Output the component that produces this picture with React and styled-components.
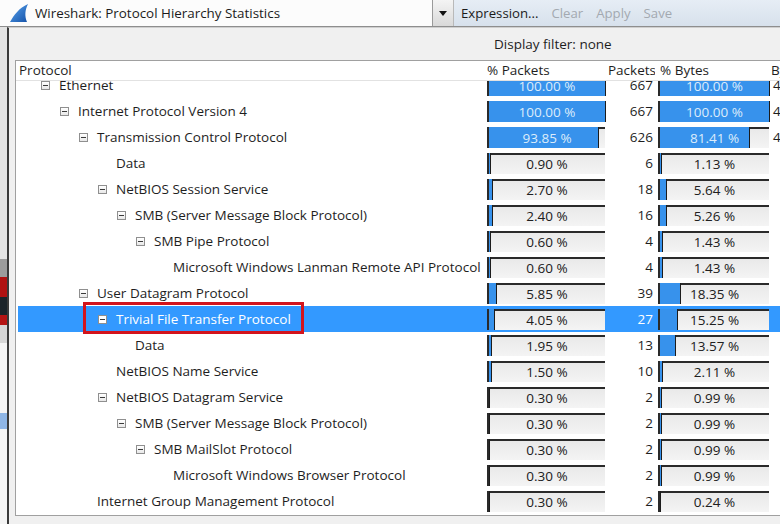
import React from 'react'
import styled, { createGlobalStyle } from 'styled-components'

const GlobalStyle = createGlobalStyle`
  html, body {
    margin: 0;
    padding: 0;
    background: #f0f0f0;
  }
  body {
    font-family: "Open Sans", "Noto Sans", sans-serif;
    color: #1e1e1e;
  }
`

const rows = [
  { name: 'Ethernet', level: 0, exp: true, pp: 100, pk: 667, bp: 100, b: '4' },
  { name: 'Internet Protocol Version 4', level: 1, exp: true, pp: 100, pk: 667, bp: 100, b: '4' },
  { name: 'Transmission Control Protocol', level: 2, exp: true, pp: 93.85, pk: 626, bp: 81.41, b: '4' },
  { name: 'Data', level: 3, pp: 0.9, pk: 6, bp: 1.13 },
  { name: 'NetBIOS Session Service', level: 3, exp: true, pp: 2.7, pk: 18, bp: 5.64 },
  { name: 'SMB (Server Message Block Protocol)', level: 4, exp: true, pp: 2.4, pk: 16, bp: 5.26 },
  { name: 'SMB Pipe Protocol', level: 5, exp: true, pp: 0.6, pk: 4, bp: 1.43 },
  { name: 'Microsoft Windows Lanman Remote API Protocol', level: 6, pp: 0.6, pk: 4, bp: 1.43 },
  { name: 'User Datagram Protocol', level: 2, exp: true, pp: 5.85, pk: 39, bp: 18.35 },
  { name: 'Trivial File Transfer Protocol', level: 3, exp: true, pp: 4.05, pk: 27, bp: 15.25, selected: true },
  { name: 'Data', level: 4, pp: 1.95, pk: 13, bp: 13.57 },
  { name: 'NetBIOS Name Service', level: 3, pp: 1.5, pk: 10, bp: 2.11 },
  { name: 'NetBIOS Datagram Service', level: 3, exp: true, pp: 0.3, pk: 2, bp: 0.99 },
  { name: 'SMB (Server Message Block Protocol)', level: 4, exp: true, pp: 0.3, pk: 2, bp: 0.99 },
  { name: 'SMB MailSlot Protocol', level: 5, exp: true, pp: 0.3, pk: 2, bp: 0.99 },
  { name: 'Microsoft Windows Browser Protocol', level: 6, pp: 0.3, pk: 2, bp: 0.99 },
  { name: 'Internet Group Management Protocol', level: 2, pp: 0.3, pk: 2, bp: 0.24 },
]

// bits of the main window peeking out on the left
const strip = [
  { c: '#e4e4e4', h: 232 },
  { c: '#9c9c9c', h: 18 },
  { c: '#b01212', h: 20 },
  { c: '#1c242a', h: 18 },
  { c: '#b51414', h: 10 },
  { c: '#d6d6d6', h: 18 },
  { c: '#f4f4f4', h: 70 },
  { c: '#8fb6e6', h: 16 },
  { c: '#f4f4f4', h: 100 },
]

const Screen = styled.div`
  width: 780px;
  height: 524px;
  overflow: hidden;
  display: flex;
  flex-direction: column;
`

const TopBar = styled.div`
  height: 26px;
  display: flex;
  border-bottom: 1px solid #8e8e8e;
  flex-shrink: 0;
`

const TitleArea = styled.div`
  width: 432px;
  display: flex;
  align-items: center;
  gap: 6px;
  padding-left: 9px;
  box-sizing: border-box;
  background: #fcfcfc;
  font-size: 13.4px;
  color: #1b1b1b;
`

const DropButton = styled.div`
  width: 20px;
  display: flex;
  align-items: center;
  justify-content: center;
  border-left: 1px solid #9a9a9a;
  border-right: 1px solid #b9b9b9;
  background: linear-gradient(#f4f4f4, #d9d9d9);
  &::after {
    content: '';
    border-left: 4px solid transparent;
    border-right: 4px solid transparent;
    border-top: 5px solid #111;
  }
`

const FilterTools = styled.div`
  flex: 1;
  display: flex;
  align-items: center;
  gap: 13px;
  padding-left: 7px;
  background: linear-gradient(#e6edf5, #d7e1ec);
  font-size: 13.2px;
`

const ToolLink = styled.span`
  color: ${p => (p.$disabled ? '#a3a9b0' : '#1b1b1b')};
`

const Body = styled.div`
  flex: 1;
  display: flex;
  min-height: 0;
`

const BackStrip = styled.div`
  width: 7px;
  display: flex;
  flex-direction: column;
  flex-shrink: 0;
`

const Swatch = styled.div`
  height: ${p => p.$h}px;
  background: ${p => p.$c};
  flex-shrink: 0;
`

const Dialog = styled.div`
  flex: 1;
  min-width: 0;
  display: flex;
  flex-direction: column;
  background: #f0f0f0;
  border-left: 2px solid #3a3a3a;
  border-top: 1px solid #cfcfcf;
  padding-left: 6px;
`

const FilterLabel = styled.div`
  height: 32px;
  line-height: 32px;
  padding-left: 479px;
  font-size: 13.5px;
  color: #1e1e1e;
  flex-shrink: 0;
`

const TreeView = styled.div`
  width: 820px;
  height: 454px;
  background: #fff;
  border: 1px solid #a0a0a0;
  display: flex;
  flex-direction: column;
  overflow: hidden;
`

const cols = '469px 122px 48px 115px 60px'

const HeaderRow = styled.div`
  display: grid;
  grid-template-columns: ${cols};
  height: 19px;
  border-bottom: 1px solid #e2e2e2;
  font-size: 13.5px;
  line-height: 19px;
  flex-shrink: 0;
  position: relative;
  z-index: 2;
  background: #fff;
`

const HeaderCell = styled.div`
  padding-left: ${p => p.$pl}px;
  white-space: nowrap;
  overflow: hidden;
`

const Viewport = styled.div`
  flex: 1;
  overflow: hidden;
`

const RowList = styled.div`
  margin-top: -9px;
`

const Row = styled.div`
  display: grid;
  grid-template-columns: ${cols};
  height: 26px;
  align-items: center;
  font-size: 13.5px;
  background: ${p =>
    p.$selected ? 'linear-gradient(to right, transparent 2px, #3399ff 2px)' : 'transparent'};
  color: ${p => (p.$selected ? '#fff' : '#1e1e1e')};
`

const TreeCell = styled.div`
  display: flex;
  align-items: center;
  padding-left: ${p => 25 + p.$level * 19}px;
  white-space: nowrap;
`

const Item = styled.span`
  display: inline-flex;
  align-items: center;
  height: 18px;
  position: relative;
  &::after {
    content: ${p => (p.$marked ? "''" : 'none')};
    position: absolute;
    inset: -8px -13px -6px -15px;
    border: 3px solid #d3141c;
  }
`

const Expander = styled.span`
  width: 9px;
  height: 9px;
  box-sizing: border-box;
  margin-right: 9px;
  border: 1px solid #8f8f8f;
  background: ${p => (p.$selected ? '#fff' : 'linear-gradient(#ffffff, #e8e8e8)')};
  display: flex;
  align-items: center;
  justify-content: center;
  visibility: ${p => (p.$leaf ? 'hidden' : 'visible')};
  &::after {
    content: '';
    width: 5px;
    height: 1px;
    background: #3a3a3a;
  }
`

const Bar = styled.div`
  position: relative;
  height: 21px;
  width: ${p => p.$w}px;
  margin-left: ${p => p.$ml}px;
  box-sizing: border-box;
  background: linear-gradient(#e9e9e9, #f4f4f4);
  border-top: 2px solid #2a2a2a;
  border-left: 2px solid #2a2a2a;
`

const Fill = styled.div`
  position: absolute;
  left: 0;
  top: -2px;
  bottom: 0;
  background: #3792ec;
  border-right: 1px solid #1c1c1c;
`

const BarText = styled.div`
  position: relative;
  text-align: center;
  line-height: 19px;
  font-size: 13.5px;
  color: ${p => (p.$light ? '#dcecfb' : '#202020')};
`

const Num = styled.div`
  text-align: right;
  padding-right: 2px;
`

const Extra = styled.div`
  padding-left: 3px;
`

const Fin = () => (
  <svg width="20" height="20" viewBox="0 0 20 20">
    <defs>
      <linearGradient id="fin" x1="0" y1="0" x2="1" y2="1">
        <stop offset="0" stopColor="#5aa5ef" />
        <stop offset="1" stopColor="#1552a8" />
      </linearGradient>
    </defs>
    <path d="M1 19 C5 12 10 5 19 1 C16 7 15.5 13 18 19 Z" fill="url(#fin)" />
  </svg>
)

const PctBar = ({ pct, w, ml }) => (
  <Bar $w={w} $ml={ml}>
    <Fill style={{ width: `${pct}%` }} />
    <BarText $light={pct > 50}>{pct.toFixed(2)} %</BarText>
  </Bar>
)

export default function App() {
  return (
    <Screen>
      <GlobalStyle />
      <TopBar>
        <TitleArea>
          <Fin />
          Wireshark: Protocol Hierarchy Statistics
        </TitleArea>
        <DropButton />
        <FilterTools>
          <ToolLink>Expression...</ToolLink>
          <ToolLink $disabled>Clear</ToolLink>
          <ToolLink $disabled>Apply</ToolLink>
          <ToolLink $disabled>Save</ToolLink>
        </FilterTools>
      </TopBar>
      <Body>
        <BackStrip>
          {strip.map((s, i) => (
            <Swatch key={i} $c={s.c} $h={s.h} />
          ))}
        </BackStrip>
        <Dialog>
          <FilterLabel>Display filter: none</FilterLabel>
          <TreeView>
            <HeaderRow>
              <HeaderCell $pl={3}>Protocol</HeaderCell>
              <HeaderCell $pl={2}>% Packets</HeaderCell>
              <HeaderCell $pl={1}>Packets</HeaderCell>
              <HeaderCell $pl={5}>% Bytes</HeaderCell>
              <HeaderCell $pl={1}>Bytes</HeaderCell>
            </HeaderRow>
            <Viewport>
              <RowList>
                {rows.map((r, i) => (
                  <Row key={i} $selected={r.selected}>
                    <TreeCell $level={r.level}>
                      <Item $marked={r.selected}>
                        <Expander $leaf={!r.exp} $selected={r.selected} />
                        {r.name}
                      </Item>
                    </TreeCell>
                    <PctBar pct={r.pp} w={118} ml={2} />
                    <Num>{r.pk}</Num>
                    <PctBar pct={r.bp} w={111} ml={3} />
                    <Extra>{r.b || ''}</Extra>
                  </Row>
                ))}
              </RowList>
            </Viewport>
          </TreeView>
        </Dialog>
      </Body>
    </Screen>
  )
}
